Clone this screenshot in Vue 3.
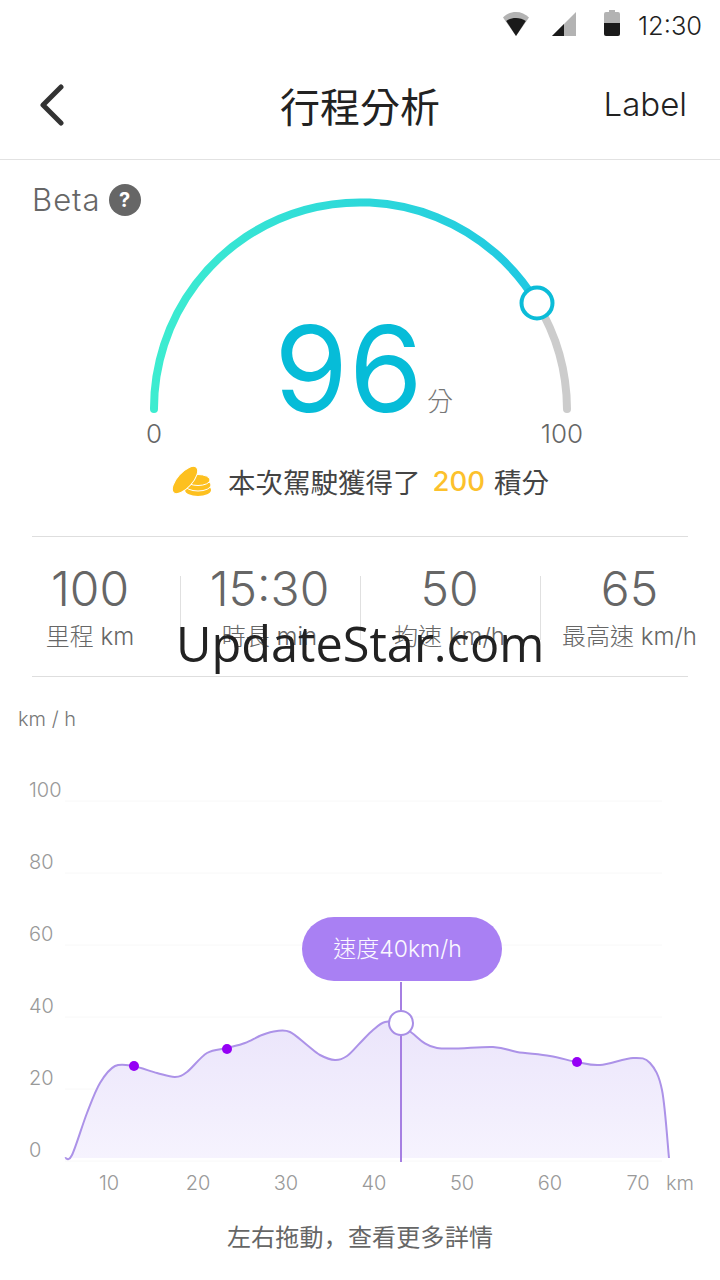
<script setup>
const stats = [
  { value: "100", label: "里程 km" },
  { value: "15:30", label: "時長 min" },
  { value: "50", label: "均速 km/h" },
  { value: "65", label: "最高速 km/h" },
];

const yLabels = [
  { text: "100", y: 797 },
  { text: "80", y: 869 },
  { text: "60", y: 941 },
  { text: "40", y: 1013 },
  { text: "20", y: 1085 },
  { text: "0", y: 1157 },
];
const gridLines = [801, 873, 945, 1017, 1089, 1161];
const xLabels = [
  { text: "10", x: 109 },
  { text: "20", x: 198 },
  { text: "30", x: 286 },
  { text: "40", x: 374 },
  { text: "50", x: 462 },
  { text: "60", x: 550 },
  { text: "70", x: 638 },
];
const dots = [
  { x: 134, y: 1066 },
  { x: 227, y: 1049 },
  { x: 577, y: 1062 },
];

// speed curve, read off the picture
const points = [
  [65, 1158], [72, 1155], [87, 1113], [100, 1083], [115, 1066], [133, 1066],
  [157, 1073], [175, 1077], [187, 1072], [207, 1053], [227, 1048], [245, 1043],
  [262, 1035], [277, 1031], [290, 1032], [307, 1045], [320, 1055], [335, 1060],
  [347, 1056], [360, 1043], [373, 1030], [385, 1022], [401, 1023], [412, 1033],
  [437, 1048], [493, 1047], [517, 1052], [550, 1056], [577, 1062], [600, 1065],
  [633, 1058], [650, 1063], [662, 1090], [669, 1158],
];

const smooth = (pts) => {
  let d = `M${pts[0][0]} ${pts[0][1]}`;
  for (let i = 0; i < pts.length - 1; i++) {
    const p0 = pts[i - 1] || pts[i];
    const p1 = pts[i];
    const p2 = pts[i + 1];
    const p3 = pts[i + 2] || p2;
    const c1x = p1[0] + (p2[0] - p0[0]) / 6;
    const c1y = p1[1] + (p2[1] - p0[1]) / 6;
    const c2x = p2[0] - (p3[0] - p1[0]) / 6;
    const c2y = p2[1] - (p3[1] - p1[1]) / 6;
    d += ` C${c1x.toFixed(1)} ${c1y.toFixed(1)} ${c2x.toFixed(1)} ${c2y.toFixed(1)} ${p2[0]} ${p2[1]}`;
  }
  return d;
};

const curve = smooth(points);
const area = curve + " Z";
</script>

<template>
  <div class="page">
    <div class="status">
      <svg class="st-wifi" width="26" height="24" viewBox="0 0 26 24">
        <path d="M0 5.500C3.500 2 8 0 13 0s9.500 2 13 5.500L13 24z" fill="#b3b3b3" />
        <path d="M3.200 9C6 7 9.300 6 13 6s7 1 9.800 3L13 24z" fill="#1a1a1a" />
      </svg>
      <svg class="st-signal" width="24" height="24" viewBox="0 0 24 24">
        <path d="M24 0V24H0z" fill="#b3b3b3" />
        <path d="M12 12V24H0z" fill="#1a1a1a" />
      </svg>
      <svg class="st-battery" width="16" height="26" viewBox="0 0 16 26">
        <path d="M5 0h6v2h3a2 2 0 0 1 2 2v9H0V4a2 2 0 0 1 2-2h3z" fill="#b3b3b3" />
        <path d="M0 13h16v11a2 2 0 0 1-2 2H2a2 2 0 0 1-2-2z" fill="#1a1a1a" />
      </svg>
      <span class="st-time">12:30</span>
    </div>

    <div class="nav">
      <svg class="back" width="26" height="42" viewBox="0 0 26 42">
        <path d="M22 3L4 21l18 18" fill="none" stroke="#333" stroke-width="5" stroke-linecap="round" stroke-linejoin="round" />
      </svg>
      <div class="title">行程分析</div>
      <div class="nav-label">Label</div>
    </div>

    <div class="gauge">
      <div class="beta">
        <span>Beta</span>
        <span class="help">?</span>
      </div>
      <svg class="gauge-svg" width="720" height="300" viewBox="0 160 720 300">
        <defs>
          <linearGradient id="arcGrad" gradientUnits="userSpaceOnUse" x1="154" y1="0" x2="537" y2="0">
            <stop offset="0" stop-color="#3decd0" />
            <stop offset="1" stop-color="#1fc8e2" />
          </linearGradient>
        </defs>
        <path d="M537 303A206 206 0 0 1 567 409" fill="none" stroke="#cccccc" stroke-width="8" stroke-linecap="round" />
        <path d="M154 409A206 206 0 0 1 537 303" fill="none" stroke="url(#arcGrad)" stroke-width="8" stroke-linecap="round" />
        <circle cx="537" cy="303" r="15.500" fill="#fff" stroke="#0bbcd8" stroke-width="4" />
        <text x="349" y="412" text-anchor="middle" class="score">96</text>
        <text x="440" y="411" text-anchor="middle" class="unit">分</text>
        <text x="154" y="443" text-anchor="middle" class="range">0</text>
        <text x="562" y="443" text-anchor="middle" class="range">100</text>
      </svg>
    </div>

    <div class="points">
      <svg class="coins" width="40" height="34" viewBox="0 0 40 34">
        <ellipse cx="26" cy="26" rx="13" ry="6" fill="#fdc01f" />
        <ellipse cx="26" cy="21" rx="13" ry="6" fill="#fdc01f" stroke="#fff" stroke-width="1" />
        <ellipse cx="26" cy="16" rx="12" ry="5.500" fill="#fdc01f" stroke="#fff" stroke-width="1" />
        <ellipse cx="13" cy="16" rx="7.500" ry="17" transform="rotate(42 13 16)" fill="#fdc01f" stroke="#fff" stroke-width="1" />
      </svg>
      <span>本次駕駛獲得了</span>
      <span class="points-num">200</span>
      <span>積分</span>
    </div>

    <div class="stats">
      <div class="stats-row">
        <div v-for="s in stats" :key="s.value" class="stat">
          <div class="stat-value">{{ s.value }}</div>
          <div class="stat-label">{{ s.label }}</div>
        </div>
      </div>
      <div class="watermark">UpdateStar.com</div>
    </div>

    <svg class="chart" width="720" height="500" viewBox="0 700 720 500">
      <defs>
        <linearGradient id="areaGrad" x1="0" y1="0" x2="0" y2="1">
          <stop offset="0" stop-color="#ebe5fb" />
          <stop offset="1" stop-color="#f6f3fe" />
        </linearGradient>
      </defs>
      <text x="18" y="726" class="axis-unit">km / h</text>
      <line v-for="y in gridLines" :key="y" x1="65" x2="662" :y1="y" :y2="y" stroke="#f8f8f8" stroke-width="1" />
      <text v-for="l in yLabels" :key="l.text" x="29" :y="l.y" class="axis">{{ l.text }}</text>
      <text v-for="l in xLabels" :key="l.text" :x="l.x" y="1190" text-anchor="middle" class="axis">{{ l.text }}</text>
      <text x="666" y="1190" class="axis">km</text>
      <path :d="area" fill="url(#areaGrad)" />
      <path :d="curve" fill="none" stroke="#ac92e8" stroke-width="2" />
      <line x1="401" x2="401" y1="982" y2="1162" stroke="#a67fe2" stroke-width="2" />
      <circle cx="401" cy="1023" r="12" fill="#fff" stroke="#a88ee6" stroke-width="2" />
      <circle v-for="d in dots" :key="d.x" :cx="d.x" :cy="d.y" r="5" fill="#9500f5" />
    </svg>
    <div class="bubble">速度40km/h</div>

    <div class="hint">左右拖動，查看更多詳情</div>
  </div>
</template>

<style>
body {
  background: #fff;
}
</style>

<style scoped>
.page {
  position: relative;
  width: 720px;
  height: 1280px;
  overflow: hidden;
  background: #fff;
  font-family: Inter, "Noto Sans CJK TC", sans-serif;
}
.status {
  height: 48px;
  display: flex;
  align-items: flex-start;
  padding-top: 11px;
  box-sizing: border-box;
}
.st-wifi {
  margin-left: 503px;
  margin-top: 1px;
}
.st-signal {
  margin-left: 23px;
  margin-top: 1px;
}
.st-battery {
  margin-left: 28px;
  margin-top: -1px;
}
.st-time {
  margin-left: 18px;
  font-size: 25.500px;
  font-weight: 300;
  line-height: 30px;
  color: #1f1f1f;
}
.nav {
  height: 112px;
  box-sizing: border-box;
  border-bottom: 1px solid #e2e2e2;
  display: flex;
  align-items: center;
  justify-content: space-between;
  padding: 1px 33px 0 39px;
  position: relative;
}
.back {
  margin-top: 2px;
}
.title {
  position: absolute;
  left: 0;
  right: 0;
  top: 36px;
  text-align: center;
  font-size: 40px;
  line-height: 48px;
  color: #222;
}
.nav-label {
  font-size: 33px;
  font-weight: 300;
  color: #222;
}
.gauge {
  position: relative;
  height: 300px;
}
.gauge-svg {
  display: block;
}
.beta {
  position: absolute;
  left: 32px;
  top: 24px;
  display: flex;
  align-items: center;
  gap: 8px;
  font-size: 31px;
  font-weight: 300;
  letter-spacing: 1px;
  line-height: 32px;
  color: #666;
}
.help {
  width: 32px;
  height: 32px;
  border-radius: 50%;
  background: #666;
  color: #fff;
  font-size: 20px;
  font-weight: 700;
  letter-spacing: 0;
  text-align: center;
}
.score {
  font-size: 119px;
  font-weight: 400;
  letter-spacing: 1px;
  fill: #06bcd8;
}
.unit {
  font-size: 26px;
  font-weight: 300;
  fill: #777;
}
.range {
  font-size: 26px;
  font-weight: 300;
  fill: #666;
}
.points {
  display: flex;
  align-items: center;
  height: 46px;
  margin-top: -2px;
  padding-left: 172px;
  font-size: 27.500px;
  color: #444;
}
.coins {
  margin-right: 16px;
}
.points-num {
  margin: 0 9px 0 12px;
  color: #fcc12c;
  font-weight: 500;
}
.stats {
  position: relative;
  margin: 32px 32px 0;
  height: 141px;
  box-sizing: border-box;
  border-top: 1px solid #dedede;
  border-bottom: 1px solid #dedede;
}
.stats-row {
  display: grid;
  grid-template-columns: repeat(4, 180px);
  margin: 0 -32px;
  padding-top: 39px;
}
.stat {
  text-align: center;
  border-left: 1px solid #e0e0e0;
  height: 64px;
}
.stat:first-child {
  border-left: 0;
}
.stat + .stat {
  padding-right: 2px;
}
.stat-value {
  font-size: 48px;
  font-weight: 350;
  line-height: 56px;
  margin-top: -15px;
  color: #666;
}
.stat-label {
  font-size: 24px;
  font-weight: 300;
  line-height: 30px;
  margin-top: 5px;
  color: #666;
  white-space: nowrap;
}
.watermark {
  position: absolute;
  left: 144px;
  top: 74px;
  font-family: "Open Sans", sans-serif;
  font-size: 48.700px;
  line-height: 64px;
  color: #222;
  white-space: nowrap;
}
.chart {
  display: block;
  margin-top: 23px;
}
.axis,
.axis-unit {
  font-size: 20px;
  font-weight: 300;
  fill: #999;
}
.axis-unit {
  fill: #777;
}
.bubble {
  position: absolute;
  left: 302px;
  top: 917px;
  width: 191px;
  padding-right: 9px;
  height: 64px;
  border-radius: 32px;
  background: #a980f3;
  color: #fbf8ff;
  font-size: 23px;
  font-weight: 300;
  line-height: 64px;
  text-align: center;
}
.hint {
  margin-top: 20px;
  text-align: center;
  font-family: Inter, "Noto Sans CJK JP", sans-serif;
  font-size: 24px;
  letter-spacing: 0.200px;
  line-height: 36px;
  color: #666;
}
</style>
